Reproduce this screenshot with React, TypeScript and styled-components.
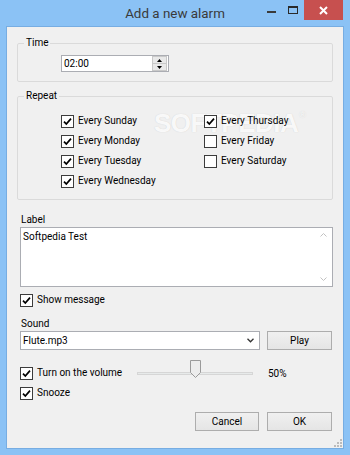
import styled, { createGlobalStyle } from "styled-components";

const Global = createGlobalStyle`
  html, body { margin:0; padding:0; }
  body { font-family: Roboto, "Liberation Sans", sans-serif; font-size:10px; color:#000; }
`

const Window = styled.div`
  width:350px;
  height:455px;
  background-color:#8bc2f5;
  display:flex;
  flex-direction:column;
`

const TitleBar = styled.div`
  height:27px;
  display:grid;
  grid-template-columns:1fr auto 1fr;
  align-items:start;
`

const Title = styled.div`
  grid-column:2;
  font-size:13.4px;
  line-height:27px;
  color:#3a3a3a;
`

const Controls = styled.div`
  grid-column:3;
  justify-self:end;
  display:flex;
  align-items:start;
  margin-right:7px;
`

const CtlButton = styled.div<{$close?:boolean}>`
  width:${p => p.$close ? "39px" : "22px"};
  height:20px;
  display:flex;
  align-items:center;
  justify-content:center;
  background-color:${p => p.$close ? "#c7504f" : "transparent"};
`

const Body = styled.div`
  flex:1;
  margin:0 7px 7px;
  background-color:#f0f0f0;
  box-shadow:0 0 0 1px #77ade2;
  position:relative;
  display:flex;
  flex-direction:column;
  padding:10px 10px 0;
`

const Group = styled.fieldset<{$top?:number}>`
  margin:${p => p.$top ?? 0}px 0 0;
  padding:0;
  border:1px solid #dadada;
  border-radius:2px;
  position:relative;
  z-index:1;
`

const Legend = styled.legend`
  margin-left:6px;
  padding:0 2px;
  line-height:12px;
`

const Spinner = styled.div`
  margin:6px 0 9px 43px;
  width:108px;
  height:17px;
  box-sizing:border-box;
  border:1px solid #abadb3;
  background:#fff;
  display:flex;
  align-items:center;
`

const SpinText = styled.span`
  flex:1;
  padding-left:2px;
`

const SpinButtons = styled.div`
  width:13px;
  height:13px;
  margin-right:1px;
  display:flex;
  flex-direction:column;
  border:1px solid #c9c9c9;
  background:#e9e9e9;
`

const SpinHalf = styled.div<{$down?:boolean}>`
  flex:1;
  display:flex;
  align-items:center;
  justify-content:center;
  border-top:${p => p.$down ? "1px solid #c9c9c9" : "none"};
`

const DaysGrid = styled.div`
  display:grid;
  grid-template-columns:143px auto;
  grid-template-rows:repeat(4, 20px);
  grid-auto-flow:column;
  padding:9px 0 8px 43px;
`

const CheckRow = styled.label<{$left?:number}>`
  display:flex;
  align-items:center;
  gap:4px;
  height:${p => p.$left !== undefined ? "14px" : "20px"};
  margin-left:${p => p.$left ?? 0}px;
  line-height:12px;
`

const Box = styled.span`
  width:13px;
  height:13px;
  box-sizing:border-box;
  border:1px solid #3c3c3c;
  background:#fff;
  display:inline-flex;
  align-items:center;
  justify-content:center;
  flex:none;
`

const FieldLabel = styled.div<{$top:number}>`
  margin:${p => p.$top}px 0 0 4px;
  line-height:12px;
`

const TextBox = styled.div`
  margin:1px 0 0 3px;
  height:60px;
  box-sizing:border-box;
  border:1px solid #abadb3;
  background:#fff;
  display:flex;
`

const TextContent = styled.div`
  flex:1;
  padding:3px 2px;
  line-height:12px;
`

const ScrollBar = styled.div`
  width:17px;
  display:flex;
  flex-direction:column;
  justify-content:space-between;
  align-items:center;
  padding:5px 0;
`

const ComboRow = styled.div`
  margin:1px 0 0 3px;
  display:flex;
  gap:7px;
`

const Combo = styled.div`
  width:240px;
  height:19px;
  box-sizing:border-box;
  border:1px solid #abadb3;
  background:#fff;
  display:flex;
  align-items:center;
  justify-content:space-between;
  padding:0 5px 0 2px;
`

const Button = styled.div<{$w:number}>`
  width:${p => p.$w}px;
  height:19px;
  box-sizing:border-box;
  border:1px solid #adadad;
  background:linear-gradient(#f0f0f0, #e5e5e5);
  display:flex;
  align-items:center;
  justify-content:center;
`

const VolumeRow = styled.div`
  margin-top:16px;
  display:grid;
  grid-template-columns:120px 116px auto;
  align-items:center;
`

const Slider = styled.div`
  position:relative;
  height:14px;
  display:flex;
  align-items:center;
`

const Track = styled.div`
  width:100%;
  height:3px;
  box-sizing:border-box;
  border:1px solid #d6d6d6;
  background:#e7eaea;
`

const Thumb = styled.svg`
  position:absolute;
  top:-6px;
  width:11px;
  height:18px;
`

const Percent = styled.span`
  margin-left:15px;
`

const Footer = styled.div`
  margin-top:12px;
  display:flex;
  justify-content:flex-end;
  gap:8px;
  padding-right:1px;
`

const Watermark = styled.div`
  position:absolute;
  left:147px;
  top:81px;
  z-index:0;
  font-family:"Liberation Sans", sans-serif;
  font-weight:bold;
  font-size:26px;
  letter-spacing:-0.5px;
  color:rgba(255,255,255,0.9);
  text-shadow:0 0 1px rgba(120,120,120,0.3);
  pointer-events:none;

  sup {
    font-size:9px;
    font-weight:normal;
    vertical-align:14px;
    margin-left:1px;
  }
`

const Grip = styled.svg`
  position:absolute;
  right:1px;
  bottom:1px;
`

const Check = ({checked}:{checked:boolean}) => (
  <Box>
    {checked &&
    <svg width="11" height="11" viewBox="0 0 11 11">
      <path d="M2 5.6 L4.3 8 L9 2.6" fill="none" stroke="#000" strokeWidth="1.7"/>
    </svg>}
  </Box>
)

const days = [
  {name:"Every Sunday", on:true},
  {name:"Every Monday", on:true},
  {name:"Every Tuesday", on:true},
  {name:"Every Wednesday", on:true},
  {name:"Every Thursday", on:true},
  {name:"Every Friday", on:false},
  {name:"Every Saturday", on:false},
];

const volume = 50;

const App = () => {
  return(
    <Window>
      <Global/>
      <TitleBar>
        <Title>Add a new alarm</Title>
        <Controls>
          <CtlButton>
            <svg width="9" height="9" viewBox="0 0 9 9"><rect x="0" y="5" width="9" height="2" fill="#3a3a3a"/></svg>
          </CtlButton>
          <CtlButton>
            <svg width="10" height="8" viewBox="0 0 10 8"><rect x="0.5" y="0.5" width="9" height="7" fill="none" stroke="#2a2a2a"/><rect x="0" y="0" width="10" height="2" fill="#2a2a2a"/></svg>
          </CtlButton>
          <CtlButton $close>
            <svg width="9" height="9" viewBox="0 0 9 9"><path d="M1 1 L8 8 M8 1 L1 8" stroke="#fff" strokeWidth="2"/></svg>
          </CtlButton>
        </Controls>
      </TitleBar>
      <Body>
        <Watermark>SOFTPEDIA<sup>®</sup></Watermark>
        <Group>
          <Legend>Time</Legend>
          <Spinner>
            <SpinText>02:00</SpinText>
            <SpinButtons>
              <SpinHalf><svg width="5" height="3"><path d="M0 3 L2.5 0 L5 3Z" fill="#000"/></svg></SpinHalf>
              <SpinHalf $down><svg width="5" height="3"><path d="M0 0 L2.5 3 L5 0Z" fill="#000"/></svg></SpinHalf>
            </SpinButtons>
          </Spinner>
        </Group>
        <Group $top={8}>
          <Legend>Repeat</Legend>
          <DaysGrid>
            {days.map(d => (
              <CheckRow key={d.name}><Check checked={d.on}/>{d.name}</CheckRow>
            ))}
          </DaysGrid>
        </Group>
        <FieldLabel $top={14}>Label</FieldLabel>
        <TextBox>
          <TextContent>Softpedia Test</TextContent>
          <ScrollBar>
            <svg width="7" height="4"><path d="M0.5 3.5 L3.5 0.5 L6.5 3.5" fill="none" stroke="#c2c2c2"/></svg>
            <svg width="7" height="4"><path d="M0.5 0.5 L3.5 3.5 L6.5 0.5" fill="none" stroke="#c2c2c2"/></svg>
          </ScrollBar>
        </TextBox>
        <CheckRow $left={3} style={{marginTop:6}}><Check checked/>Show message</CheckRow>
        <FieldLabel $top={11}>Sound</FieldLabel>
        <ComboRow>
          <Combo>
            <span>Flute.mp3</span>
            <svg width="7" height="5"><path d="M0.5 0.8 L3.5 3.8 L6.5 0.8" fill="none" stroke="#333" strokeWidth="1.3"/></svg>
          </Combo>
          <Button $w={65}>Play</Button>
        </ComboRow>
        <VolumeRow>
          <CheckRow $left={3}><Check checked/>Turn on the volume</CheckRow>
          <Slider>
            <Track/>
            <Thumb viewBox="0 0 11 18" style={{left: Math.round((116 - 11) * volume / 100)}}>
              <path d="M0.5 0.5 H10.5 V12.5 L5.5 17.5 L0.5 12.5 Z" fill="#ececec" stroke="#9a9a9a"/>
            </Thumb>
          </Slider>
          <Percent>{volume}%</Percent>
        </VolumeRow>
        <CheckRow $left={3} style={{marginTop:6}}><Check checked/>Snooze</CheckRow>
        <Footer>
          <Button $w={64}>Cancel</Button>
          <Button $w={65}>OK</Button>
        </Footer>
        <Grip width="8" height="8" viewBox="0 0 8 8">
          <rect x="6" y="0" width="2" height="2" fill="#bcbcbc"/>
          <rect x="3" y="3" width="2" height="2" fill="#bcbcbc"/>
          <rect x="6" y="3" width="2" height="2" fill="#bcbcbc"/>
          <rect x="0" y="6" width="2" height="2" fill="#bcbcbc"/>
          <rect x="3" y="6" width="2" height="2" fill="#bcbcbc"/>
          <rect x="6" y="6" width="2" height="2" fill="#bcbcbc"/>
        </Grip>
      </Body>
    </Window>
  )
}

export default App;
